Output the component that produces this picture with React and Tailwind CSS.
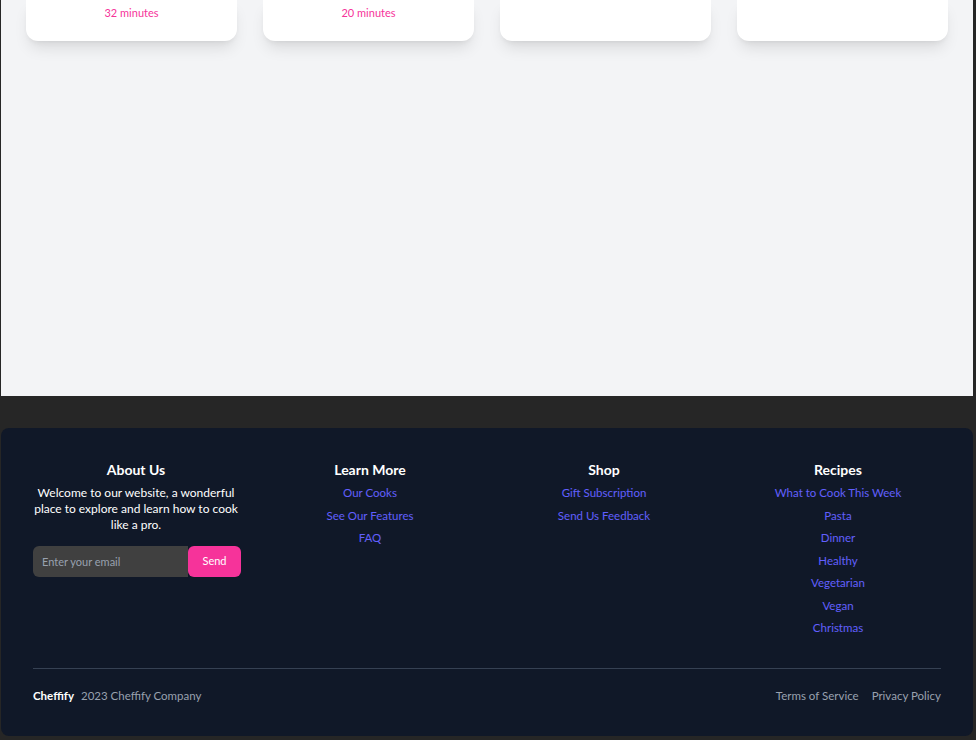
import React from "react";

const cards = [
	{ id: 1, time: "32 minutes" },
	{ id: 2, time: "20 minutes" },
	{ id: 3, time: "" },
	{ id: 4, time: "" },
];

const columns = [
	{ title: "Learn More", links: ["Our Cooks", "See Our Features", "FAQ"] },
	{ title: "Shop", links: ["Gift Subscription", "Send Us Feedback"] },
	{
		title: "Recipes",
		links: [
			"What to Cook This Week",
			"Pasta",
			"Dinner",
			"Healthy",
			"Vegetarian",
			"Vegan",
			"Christmas",
		],
	},
];

const App = () => {
	return (
		<div
			className="min-h-screen bg-[#262626] pl-px pr-[3px] pb-[4px]"
			style={{ fontFamily: "Lato, 'Noto Sans', sans-serif" }}
		>
			{/* recipe grid (scrolled) */}
			<div className="h-[396px] bg-gray-100 px-[25px]">
				<div className="grid grid-cols-4 gap-[26px]">
					{cards.map((card) => (
						<div
							key={card.id}
							className="h-[41px] bg-white rounded-b-xl shadow-[0_10px_15px_-3px_rgba(0,0,0,0.1),0_4px_6px_-4px_rgba(0,0,0,0.1)] flex justify-center"
						>
							<span className="text-[11px] leading-4 text-pink-500 mt-[5px]">
								{card.time}
							</span>
						</div>
					))}
				</div>
			</div>

			<footer className="mt-8 bg-gray-900 rounded-lg px-8 pt-8 pb-8 text-white">
				<div className="grid grid-cols-4 gap-7">
					<div className="flex flex-col items-center text-center">
						<h3 className="text-sm font-bold leading-5">About Us</h3>
						<p className="mt-[5px] text-[12px] leading-4">
							Welcome to our website, a wonderful place to explore and learn how
							to cook like a pro.
						</p>
						<div className="flex mt-[13px] self-start">
							<input
								type="email"
								placeholder="Enter your email"
								className="w-[155px] h-[31px] bg-neutral-700 rounded-l-md px-[9px] text-[11px] text-white placeholder-gray-400 outline-none"
							/>
							<button className="w-[53px] h-[31px] bg-pink-500 rounded-md text-[11px] text-white">
								Send
							</button>
						</div>
					</div>
					{columns.map((col) => (
						<div key={col.title} className="flex flex-col items-center text-center">
							<h3 className="text-sm font-bold leading-5">{col.title}</h3>
							<ul className="mt-[2px]">
								{col.links.map((link) => (
									<li key={link} className="text-[11.5px] leading-[22.5px]">
										<a href="#" className="text-indigo-500">
											{link}
										</a>
									</li>
								))}
							</ul>
						</div>
					))}
				</div>

				<div className="mt-[28px] border-t border-gray-700 pt-[19px] flex items-center justify-between text-[11.5px] leading-4">
					<div className="flex items-center gap-[7px]">
						<span className="font-bold text-white">Cheffify</span>
						<span className="text-gray-400">2023 Cheffify Company</span>
					</div>
					<div className="flex items-center gap-[13px] text-gray-400">
						<a href="#">Terms of Service</a>
						<a href="#">Privacy Policy</a>
					</div>
				</div>
			</footer>
		</div>
	);
};

export default App;
